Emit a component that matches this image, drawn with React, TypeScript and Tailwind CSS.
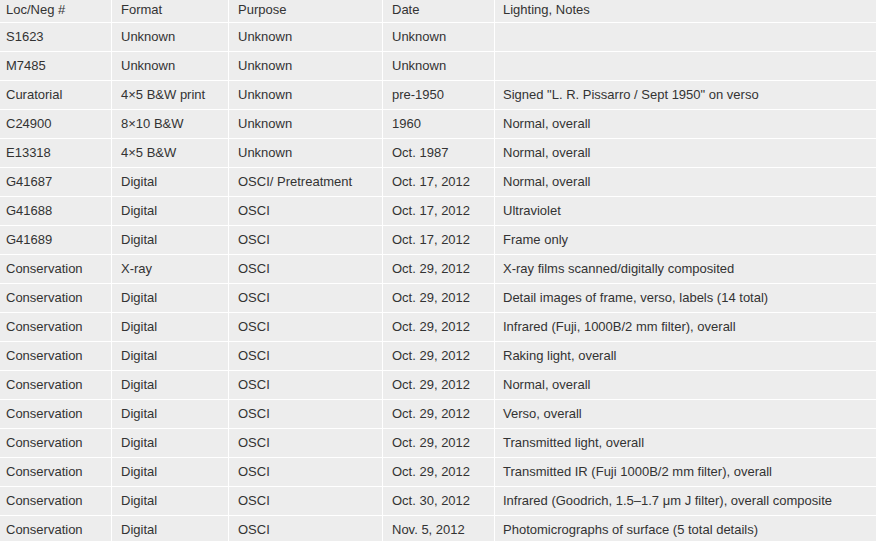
import React from "react";

const rows: string[][] = [
  ["S1623", "Unknown", "Unknown", "Unknown", ""],
  ["M7485", "Unknown", "Unknown", "Unknown", ""],
  ["Curatorial", "4×5 B&W print", "Unknown", "pre-1950", "Signed \"L. R. Pissarro / Sept 1950\" on verso"],
  ["C24900", "8×10 B&W", "Unknown", "1960", "Normal, overall"],
  ["E13318", "4×5 B&W", "Unknown", "Oct. 1987", "Normal, overall"],
  ["G41687", "Digital", "OSCI/ Pretreatment", "Oct. 17, 2012", "Normal, overall"],
  ["G41688", "Digital", "OSCI", "Oct. 17, 2012", "Ultraviolet"],
  ["G41689", "Digital", "OSCI", "Oct. 17, 2012", "Frame only"],
  ["Conservation", "X-ray", "OSCI", "Oct. 29, 2012", "X-ray films scanned/digitally composited"],
  ["Conservation", "Digital", "OSCI", "Oct. 29, 2012", "Detail images of frame, verso, labels (14 total)"],
  ["Conservation", "Digital", "OSCI", "Oct. 29, 2012", "Infrared (Fuji, 1000B/2 mm filter), overall"],
  ["Conservation", "Digital", "OSCI", "Oct. 29, 2012", "Raking light, overall"],
  ["Conservation", "Digital", "OSCI", "Oct. 29, 2012", "Normal, overall"],
  ["Conservation", "Digital", "OSCI", "Oct. 29, 2012", "Verso, overall"],
  ["Conservation", "Digital", "OSCI", "Oct. 29, 2012", "Transmitted light, overall"],
  ["Conservation", "Digital", "OSCI", "Oct. 29, 2012", "Transmitted IR (Fuji 1000B/2 mm filter), overall"],
  ["Conservation", "Digital", "OSCI", "Oct. 30, 2012", "Infrared (Goodrich, 1.5–1.7 μm J filter), overall composite"],
  ["Conservation", "Digital", "OSCI", "Nov. 5, 2012", "Photomicrographs of surface (5 total details)"],
];

const header = ["Loc/Neg #", "Format", "Purpose", "Date", "Lighting, Notes"];

const padFor = (i: number) => (i === 0 ? "pl-[6px]" : i === 4 ? "pl-[8px]" : "pl-[9px]");

export default function App() {
  return (
    <div
      className="w-[876px] h-[541px] overflow-hidden bg-white text-[13px] text-[#333333]"
      style={{ fontFamily: '"Liberation Sans", Arial, Helvetica, sans-serif' }}
    >
      <div className="grid grid-cols-[111px_116px_153px_111px_1fr] gap-px bg-white">
        {header.map((h, i) => (
          <div key={"h" + i} className={`h-[22px] bg-[#ededed] ${padFor(i)} pt-[2px] leading-[16px] whitespace-nowrap`}>
            {h}
          </div>
        ))}
        {rows.map((r, ri) =>
          r.map((c, ci) => (
            <div
              key={ri + "-" + ci}
              className={`h-[28px] bg-[#ededed] ${padFor(ci)} flex items-center whitespace-nowrap leading-[16px]`}
            >
              {c}
            </div>
          ))
        )}
      </div>
    </div>
  );
}
